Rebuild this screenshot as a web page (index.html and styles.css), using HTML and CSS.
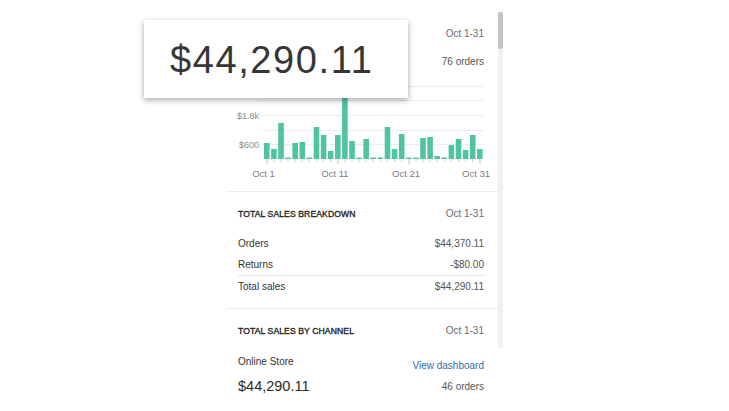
FILE: index.html
```html
<!DOCTYPE html>
<html lang="en">
<head>
<meta charset="utf-8">
<title>Total sales</title>
<link rel="stylesheet" href="styles.css">
</head>
<body>
<div class="stage">
  <div class="frame">
    <div class="panel">
      <section class="summary">
        <div class="row">
          <span class="spacer"></span>
          <span class="muted">Oct 1-31</span>
        </div>
        <div class="row row-second">
          <span class="spacer"></span>
          <span class="value">76 orders</span>
        </div>
        <svg class="chart" width="272" height="102" viewBox="0 0 272 102">
          <g stroke="#ececec" stroke-width="1">
            <line x1="36" y1="6.5" x2="258" y2="6.5"/>
            <line x1="36" y1="20.5" x2="258" y2="20.5"/>
            <line x1="36" y1="35.5" x2="258" y2="35.5"/>
            <line x1="36" y1="50.5" x2="258" y2="50.5"/>
            <line x1="36" y1="64.5" x2="258" y2="64.5"/>
          </g>
          <g font-family="Liberation Sans, Arial, sans-serif" font-size="9" fill="#8a8a8a" text-anchor="end">
            <text x="33" y="39">$1.8k</text>
            <text x="33" y="68">$600</text>
          </g>
          <g fill="#50c4a1">
            <rect x="38" y="63" width="5.6" height="16"/>
            <rect x="45.1" y="69" width="5.6" height="10"/>
            <rect x="52.2" y="43" width="5.6" height="36"/>
            <rect x="59.3" y="77.5" width="5.6" height="1.5"/>
            <rect x="66.4" y="63" width="5.6" height="16"/>
            <rect x="73.5" y="62" width="5.6" height="17"/>
            <rect x="80.6" y="77.5" width="5.6" height="1.5"/>
            <rect x="87.7" y="47" width="5.6" height="32"/>
            <rect x="94.8" y="55" width="5.6" height="24"/>
            <rect x="101.9" y="71" width="5.6" height="8"/>
            <rect x="109" y="55" width="5.6" height="24"/>
            <rect x="116.1" y="4" width="5.6" height="75"/>
            <rect x="123.2" y="61" width="5.6" height="18"/>
            <rect x="130.3" y="77.5" width="5.6" height="1.5"/>
            <rect x="137.4" y="59" width="5.6" height="20"/>
            <rect x="144.5" y="77.5" width="5.6" height="1.5"/>
            <rect x="151.6" y="77.5" width="5.6" height="1.5"/>
            <rect x="158.7" y="47" width="5.6" height="32"/>
            <rect x="165.8" y="69" width="5.6" height="10"/>
            <rect x="172.9" y="54" width="5.6" height="25"/>
            <rect x="180" y="77.5" width="5.6" height="1.5"/>
            <rect x="187.1" y="77.5" width="5.6" height="1.5"/>
            <rect x="194.2" y="58" width="5.6" height="21"/>
            <rect x="201.3" y="57" width="5.6" height="22"/>
            <rect x="208.4" y="76" width="5.6" height="3"/>
            <rect x="215.5" y="77.5" width="5.6" height="1.5"/>
            <rect x="222.6" y="65" width="5.6" height="14"/>
            <rect x="229.7" y="59" width="5.6" height="20"/>
            <rect x="236.8" y="70" width="5.6" height="9"/>
            <rect x="243.9" y="55" width="5.6" height="24"/>
            <rect x="251" y="69" width="5.6" height="10"/>
          </g>
          <g stroke="#cfcfcf" stroke-width="1">
            <line x1="48" y1="79" x2="48" y2="82"/>
            <line x1="55" y1="79" x2="55" y2="82"/>
            <line x1="62" y1="79" x2="62" y2="82"/>
            <line x1="69" y1="79" x2="69" y2="82"/>
            <line x1="76" y1="79" x2="76" y2="82"/>
            <line x1="83" y1="79" x2="83" y2="82"/>
            <line x1="90.5" y1="79" x2="90.5" y2="82"/>
            <line x1="97.5" y1="79" x2="97.5" y2="82"/>
            <line x1="104.5" y1="79" x2="104.5" y2="82"/>
            <line x1="119" y1="79" x2="119" y2="82"/>
            <line x1="126" y1="79" x2="126" y2="82"/>
            <line x1="133" y1="79" x2="133" y2="82"/>
            <line x1="140" y1="79" x2="140" y2="82"/>
            <line x1="147" y1="79" x2="147" y2="82"/>
            <line x1="154.5" y1="79" x2="154.5" y2="82"/>
            <line x1="161.5" y1="79" x2="161.5" y2="82"/>
            <line x1="168.5" y1="79" x2="168.5" y2="82"/>
            <line x1="175.5" y1="79" x2="175.5" y2="82"/>
            <line x1="190" y1="79" x2="190" y2="82"/>
            <line x1="197" y1="79" x2="197" y2="82"/>
            <line x1="204" y1="79" x2="204" y2="82"/>
            <line x1="211" y1="79" x2="211" y2="82"/>
            <line x1="218.5" y1="79" x2="218.5" y2="82"/>
            <line x1="225.5" y1="79" x2="225.5" y2="82"/>
            <line x1="232.5" y1="79" x2="232.5" y2="82"/>
            <line x1="239.5" y1="79" x2="239.5" y2="82"/>
            <line x1="246.5" y1="79" x2="246.5" y2="82"/>
          </g>
          <g stroke="#bdbdbd" stroke-width="1">
            <line x1="41" y1="79" x2="41" y2="84"/>
            <line x1="112" y1="79" x2="112" y2="84"/>
            <line x1="183" y1="79" x2="183" y2="84"/>
            <line x1="254" y1="79" x2="254" y2="84"/>
          </g>
          <g font-family="Liberation Sans, Arial, sans-serif" font-size="9.5" fill="#7d7d7d" text-anchor="middle">
            <text x="37.5" y="96.5">Oct 1</text>
            <text x="109" y="96.5">Oct 11</text>
            <text x="180" y="96.5">Oct 21</text>
            <text x="250" y="96.5">Oct 31</text>
          </g>
        </svg>
      </section>

      <section class="breakdown">
        <div class="row">
          <span class="heading">TOTAL SALES BREAKDOWN</span>
          <span class="muted">Oct 1-31</span>
        </div>
        <div class="lines">
          <div class="line"><span class="label">Orders</span><span class="value">$44,370.11</span></div>
          <div class="line"><span class="label">Returns</span><span class="value">-$80.00</span></div>
          <div class="line line-total"><span class="label">Total sales</span><span class="value">$44,290.11</span></div>
        </div>
      </section>

      <section class="channel">
        <div class="row">
          <span class="heading">TOTAL SALES BY CHANNEL</span>
          <span class="muted">Oct 1-31</span>
        </div>
        <div class="store">
          <div class="store-top">
            <span class="label">Online Store</span>
            <a class="link" href="#">View dashboard</a>
          </div>
          <div class="store-bottom">
            <span class="store-amount">$44,290.11</span>
            <span class="value orders">46 orders</span>
          </div>
        </div>
      </section>
    </div>
    <div class="track"><div class="thumb"></div></div>
  </div>
  <div class="popup"><span class="popup-amount">$44,290.11</span></div>
</div>
</body>
</html>
```

FILE: styles.css
```css
* { box-sizing: border-box; }

html, body {
  margin: 0;
  padding: 0;
  background: #ffffff;
}

body {
  font-family: "Liberation Sans", Arial, sans-serif;
  font-size: 10px;
  color: #333333;
}

.stage {
  position: relative;
  width: 729px;
  height: 411px;
  overflow: hidden;
  padding: 12px 0 0 226px;
}

.frame {
  display: flex;
  align-items: flex-start;
  width: 277px;
}

.panel {
  width: 272px;
  flex: none;
}

.track {
  width: 4.5px;
  height: 336px;
  background: #f0f0f0;
  flex: none;
}

.thumb {
  width: 100%;
  height: 37px;
  background: #c4c4c4;
  border-radius: 2px;
}

.row {
  display: flex;
  justify-content: space-between;
  align-items: center;
  line-height: 12px;
}

.spacer {
  display: block;
  width: 1px;
  height: 12px;
}

.summary {
  padding: 16px 14px 9px 12px;
  border-bottom: 1px solid #ebebeb;
}

.row-second {
  margin-top: 16px;
}

.chart {
  display: block;
  margin: 12px 0 0 -12px;
}

.label { color: #333333; }
.value { color: #555555; }
.muted { color: #6b6b6b; }

.heading {
  font-size: 8.6px;
  font-weight: normal;
  letter-spacing: 0.1px;
  color: #262626;
  -webkit-text-stroke: 0.35px #262626;
}

.breakdown {
  padding: 16px 14px 11px 12px;
  border-bottom: 1px solid #ebebeb;
}

.lines {
  margin-top: 13px;
}

.line {
  display: flex;
  justify-content: space-between;
  height: 21px;
  line-height: 21px;
}

.line-total {
  border-top: 1px solid #e6e6e6;
  height: 22px;
  line-height: 21px;
}

.channel {
  padding: 16px 14px 0 12px;
}

.store {
  margin-top: 19px;
}

.store-top {
  display: flex;
  justify-content: space-between;
  align-items: flex-start;
  line-height: 12px;
}

.link {
  margin-top: 4px;
  color: #2f6eae;
  text-decoration: none;
}

.store-bottom {
  display: flex;
  justify-content: space-between;
  align-items: center;
  margin-top: 5px;
}

.store-amount {
  font-size: 14.5px;
  line-height: 18px;
  color: #2b2b2b;
}

.orders {
  line-height: 12px;
  padding-top: 2px;
}

.popup {
  position: absolute;
  left: 144px;
  top: 20px;
  width: 264px;
  height: 78px;
  background: #ffffff;
  box-shadow: 0 2px 6px rgba(0, 0, 0, 0.35);
  display: flex;
  align-items: center;
  padding: 2px 0 0 26px;
}

.popup-amount {
  font-size: 38px;
  letter-spacing: 1.6px;
  color: #363636;
  line-height: 1;
}
```
